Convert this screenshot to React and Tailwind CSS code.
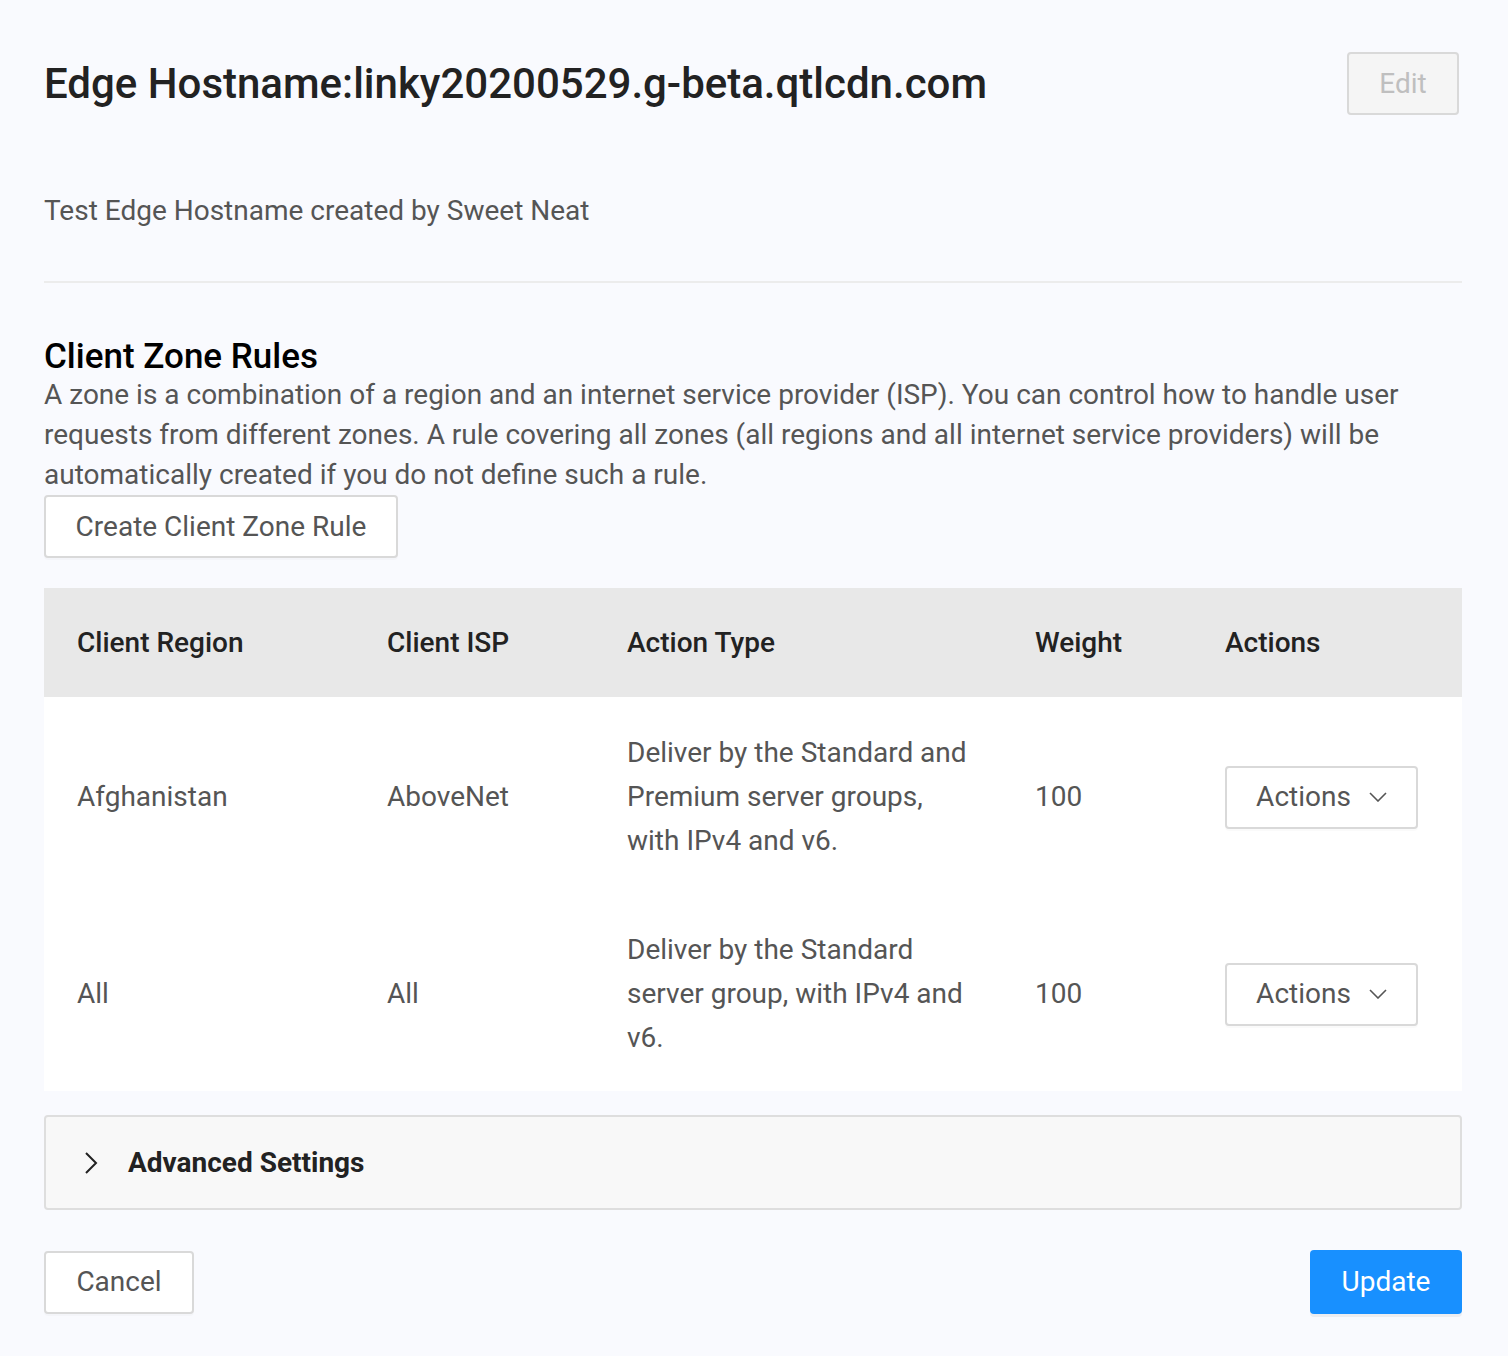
const rules = [
  {
    region: 'Afghanistan',
    isp: 'AboveNet',
    action: 'Deliver by the Standard and Premium server groups, with IPv4 and v6.',
    weight: 100,
  },
  {
    region: 'All',
    isp: 'All',
    action: 'Deliver by the Standard server group, with IPv4 and v6.',
    weight: 100,
  },
];

const ActionsButton = () => (
  <button className="flex h-[63px] w-[193px] items-center justify-center gap-[18px] rounded-[4px] border-2 border-[#d9d9d9] bg-white text-[28px] text-[#555] shadow-[0_2px_0_rgba(0,0,0,0.02)]">
    Actions
    <svg width="18" height="10" viewBox="0 0 18 10" fill="none" stroke="#555" strokeWidth="1.6">
      <polyline points="1,1 9,9 17,1" />
    </svg>
  </button>
);

const App = () => {
  return (
    <div
      className="min-h-[1356px] bg-[#f9fafe] pl-[44px] pr-[46px] pt-[52px] pb-[42px]"
      style={{ fontFamily: 'Roboto, "Noto Sans", sans-serif' }}
    >
      <div className="flex items-start justify-between">
        <h1 className="pt-[6px] text-[42px] font-medium leading-[52px] text-[#222]">
          Edge Hostname:linky20200529.g-beta.qtlcdn.com
        </h1>
        <button className="mr-[3px] h-[63px] w-[112px] rounded-[4px] border-2 border-[#d9d9d9] bg-[#f5f5f5] text-[28px] text-[#bfbfbf]">
          Edit
        </button>
      </div>

      <p className="mt-[76px] text-[28px] leading-[40px] text-[#555]">
        Test Edge Hostname created by Sweet Neat
      </p>

      <div className="mt-[50px] h-[2px] bg-[#ececec]" />

      <h2 className="mt-[56px] text-[35px] font-medium leading-[36px] text-black">Client Zone Rules</h2>
      <p className="text-[28px] leading-[40px] text-[#555]">
        A zone is a combination of a region and an internet service provider (ISP). You can control how to handle user
        requests from different zones. A rule covering all zones (all regions and all internet service providers) will be
        automatically created if you do not define such a rule.
      </p>
      <button className="h-[63px] w-[354px] rounded-[4px] border-2 border-[#d9d9d9] bg-white text-[28px] text-[#555] shadow-[0_2px_0_rgba(0,0,0,0.02)]">
        Create Client Zone Rule
      </button>

      <div className="mt-[30px] bg-white">
        <div className="grid h-[109px] grid-cols-[310px_240px_408px_190px_1fr] items-center bg-[#e8e8e8] pl-[33px] text-[28px] font-medium text-[#222]">
          <div>Client Region</div>
          <div>Client ISP</div>
          <div>Action Type</div>
          <div>Weight</div>
          <div>Actions</div>
        </div>
        {rules.map((r) => (
          <div
            key={r.region}
            className="grid h-[197px] grid-cols-[310px_240px_408px_190px_1fr] items-center pt-[3px] pl-[33px] text-[28px] leading-[44px] text-[#555]"
          >
            <div>{r.region}</div>
            <div>{r.isp}</div>
            <div className="max-w-[350px]">{r.action}</div>
            <div>{r.weight}</div>
            <div>
              <ActionsButton />
            </div>
          </div>
        ))}
      </div>

      <div className="mt-[24px] flex h-[95px] items-center gap-[30px] rounded-[4px] border-2 border-[#dedede] bg-[#f8f8f8] pl-[38px]">
        <svg width="14" height="24" viewBox="0 0 14 24" fill="none" stroke="#222" strokeWidth="2">
          <polyline points="2,2 12,12 2,22" />
        </svg>
        <span className="text-[28px] font-bold text-[#222]">Advanced Settings</span>
      </div>

      <div className="mt-[40px] flex items-center justify-between">
        <button className="h-[63px] w-[150px] rounded-[4px] border-2 border-[#d9d9d9] bg-white text-[28px] text-[#555] shadow-[0_2px_0_rgba(0,0,0,0.02)]">
          Cancel
        </button>
        <button className="h-[64px] w-[152px] rounded-[4px] bg-[#1890ff] text-[28px] text-white shadow-[0_3px_0_rgba(0,0,0,0.05)]">
          Update
        </button>
      </div>
    </div>
  );
};

export default App;
